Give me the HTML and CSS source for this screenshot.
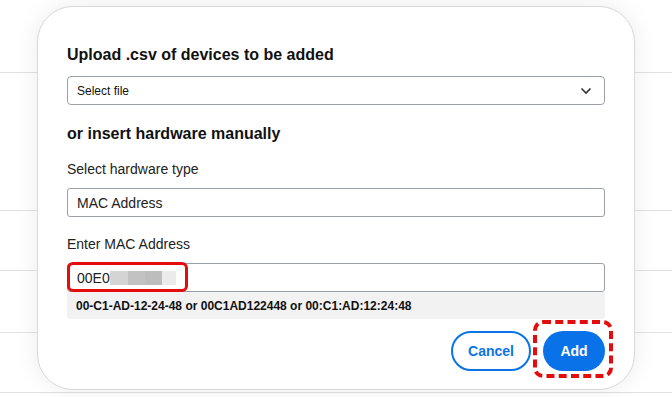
FILE: index.html
```html
<!DOCTYPE html>
<html>
<head>
<meta charset="utf-8">
<link rel="stylesheet" href="styles.css">
</head>
<body>
<div class="page">
  <div class="row r1"></div>
  <div class="row r2"></div>
  <div class="row r3"></div>
  <div class="row r4"></div>
  <div class="row r5"></div>
</div>
<div class="modal">
  <h2 class="title">Upload .csv of devices to be added</h2>
  <div class="select">
    <span>Select file</span>
    <svg class="chev" width="12" height="8" viewBox="0 0 12 8"><path d="M1.5 1.5 L6 6 L10.5 1.5" fill="none" stroke="#333" stroke-width="1.6"/></svg>
  </div>
  <h2 class="title t2">or insert hardware manually</h2>
  <div class="label">Select hardware type</div>
  <div class="input">MAC Address</div>
  <div class="label l2">Enter MAC Address</div>
  <div class="input mac">
    <span>00E0</span><span class="blur"><i class="b1"></i><i class="b2"></i><i class="b3"></i><i class="b4"></i></span>
    <div class="redbox"></div>
  </div>
  <div class="hint">00-C1-AD-12-24-48 or 00C1AD122448 or 00:C1:AD:12:24:48</div>
  <div class="actions">
    <button class="btn cancel">Cancel</button>
    <div class="addwrap"><button class="btn add">Add</button><div class="dash"></div></div>
  </div>
</div>
</body>
</html>
```
FILE: styles.css
```css
html, body { margin: 0; padding: 0; }
body {
  width: 672px; height: 397px; overflow: hidden;
  background: #fff;
  font-family: "Liberation Sans", Arial, sans-serif;
  color: #1a1a1a;
  position: relative;
}
.page { display: flex; flex-direction: column; }
.row { border-bottom: 1px solid #e2e2e2; box-sizing: border-box; }
.r1 { height: 73px; }
.r2 { height: 138px; }
.r3 { height: 60px; }
.r4 { height: 62px; }
.r5 { height: 60px; }

.modal {
  position: absolute;
  left: 37px; top: 6px;
  width: 598px; height: 384px;
  box-sizing: border-box;
  background: #fff;
  border: 1px solid #d9d9d9;
  border-radius: 36px;
  box-shadow: 0 0 24px rgba(0,0,0,0.08);
  padding: 38px 29px 0 29px;
}
.title {
  margin: 0;
  font-size: 16px;
  font-weight: bold;
  line-height: 20px;
  color: #111;
}
.select {
  margin-top: 11px;
  height: 29px;
  box-sizing: border-box;
  border: 1px solid #9aa0a6;
  border-radius: 4px;
  display: flex; align-items: center; justify-content: space-between;
  padding: 0 12px 0 9px;
  font-size: 12px;
  color: #111;
}
.t2 { margin-top: 19px; }
.label { margin-top: 17px; font-size: 14px; line-height: 16px; color: #222; }
.l2 { margin-top: 19px; }
.input {
  margin-top: 11px;
  height: 29px;
  box-sizing: border-box;
  border: 1px solid #9aa0a6;
  border-radius: 3px;
  display: flex; align-items: center;
  padding: 0 9px;
  font-size: 14px;
  color: #222;
}
.mac { position: relative; margin-top: 11px; }
.blur { display: flex; height: 14px; margin-left: 0; }
.blur i { display: block; height: 14px; }
.b1 { width: 18px; background: #d4d4d4; }
.b2 { width: 17px; background: #c2c2c2; }
.b3 { width: 17px; background: #bdbdbd; }
.b4 { width: 14px; background: #ebebeb; }
.redbox {
  position: absolute;
  left: -1px; top: -2px;
  width: 121px; height: 30px;
  box-sizing: border-box;
  border: 3px solid #e30d0d;
  border-radius: 6px;
}
.hint {
  height: 27px;
  background: #f2f2f2;
  display: flex; align-items: center;
  padding: 0 9px;
  font-size: 12px;
  font-weight: bold;
  color: #111;
  border-radius: 0 0 3px 3px;
}
.actions {
  margin-top: 12px;
  display: flex; justify-content: flex-end; align-items: center; gap: 12px;
}
.btn {
  height: 40px;
  border-radius: 20px;
  font-family: "Liberation Sans", Arial, sans-serif;
  font-size: 14px;
  font-weight: bold;
  box-sizing: border-box;
}
.cancel {
  width: 80px;
  background: #fff;
  border: 2px solid #0b74e5;
  color: #0b74e5;
}
.addwrap { position: relative; }
.add {
  display: block;
  width: 62px;
  background: #0a72e8;
  border: none;
  color: #fff;
}
.dash {
  position: absolute;
  left: -10px; top: -11px;
  width: 80px; height: 58px;
  box-sizing: border-box;
  border: 4px dashed #e30d0d;
  border-radius: 10px;
}
```
